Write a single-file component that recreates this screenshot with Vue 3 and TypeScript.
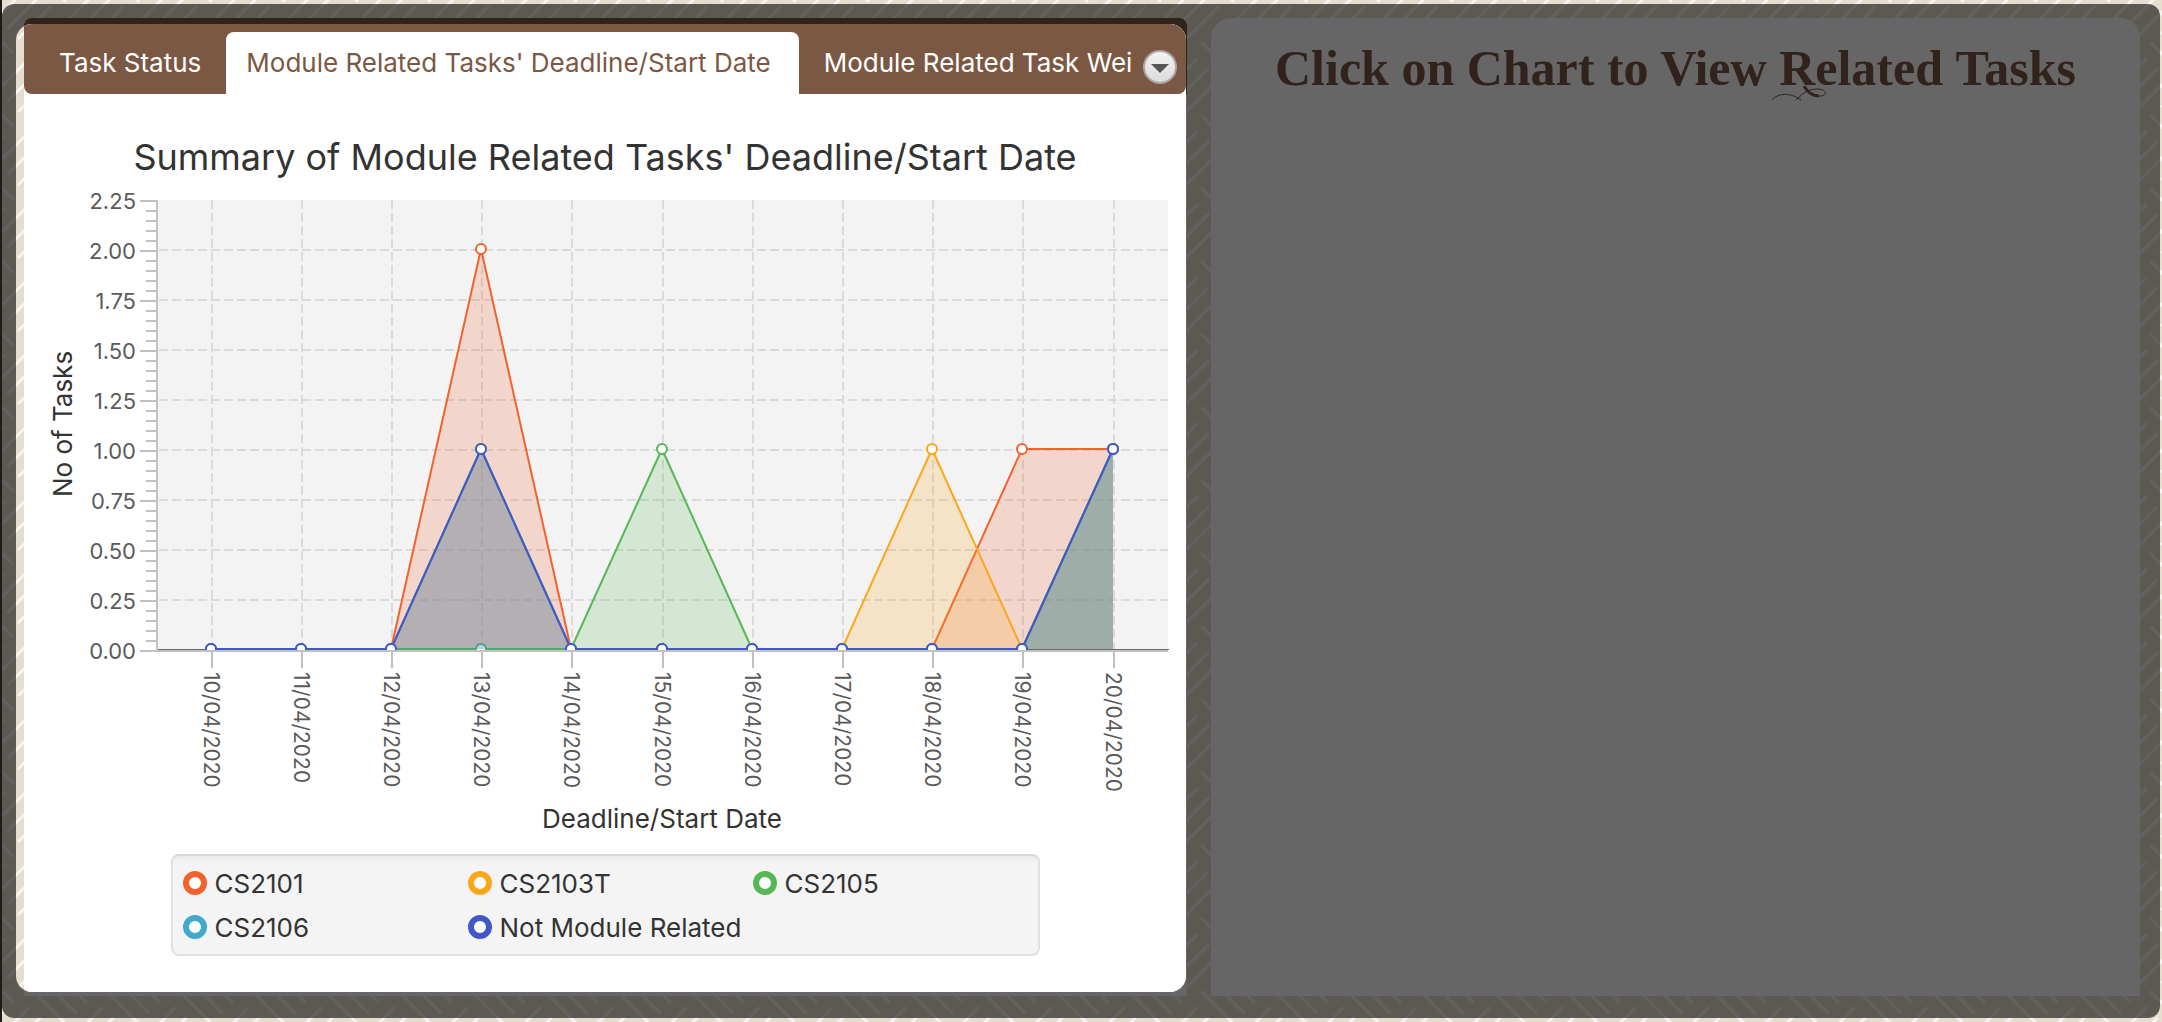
<script setup lang="ts">
import { ref } from 'vue'

interface Series {
  name: string
  color: string
  values: number[]
}

const tabs = ["Task Status", "Module Related Tasks' Deadline/Start Date", 'Module Related Task Wei']
const activeTab = ref(1)

const dates = [10, 11, 12, 13, 14, 15, 16, 17, 18, 19, 20].map((day) => `${day}/04/2020`)

const series: Series[] = [
  { name: 'CS2101', color: '#f3622d', values: [0, 0, 0, 2, 0, 0, 0, 0, 0, 1, 1] },
  { name: 'CS2103T', color: '#fba71b', values: [0, 0, 0, 1, 0, 0, 0, 0, 1, 0, 1] },
  { name: 'CS2105', color: '#57b757', values: [0, 0, 0, 0, 0, 1, 0, 0, 0, 0, 1] },
  { name: 'CS2106', color: '#41a9c9', values: [0, 0, 0, 1, 0, 0, 0, 0, 0, 0, 1] },
  { name: 'Not Module Related', color: '#4258c9', values: [0, 0, 0, 1, 0, 0, 0, 0, 0, 0, 1] },
]

// Plot area inside the chart's own coordinate system
const plot = { left: 133, right: 1144, top: 21, bottom: 471 }
const firstDate = 188
const dateStep = 90.2
const unit = 200

const tickX = (i: number): number => firstDate + Math.floor(i * dateStep)
const dataX = (i: number): number => tickX(i) - 1
const dataY = (v: number): number => plot.bottom - 1 - v * unit

const majors = Array.from({ length: 10 }, (_, i) => ({
  label: (2.25 - i * 0.25).toFixed(2),
  y: plot.top + 1 + i * 50,
}))
const minors = Array.from({ length: 45 }, (_, i) => plot.top + 1 + i * 10)
const gridRows = Array.from({ length: 8 }, (_, i) => plot.top + 50 + i * 50)

const linePoints = (s: Series): string => s.values.map((v, i) => `${dataX(i)},${dataY(v)}`).join(' ')
const areaPoints = (s: Series): string =>
  `${dataX(0)},${dataY(0)} ${linePoints(s)} ${dataX(s.values.length - 1)},${dataY(0)}`
</script>

<template>
  <main class="page">
    <div class="window">
      <section class="chart-side">
        <div class="popup">
          <div class="card">
            <nav class="tab-bar" role="tablist" aria-label="Statistics">
              <button
                v-for="(tab, i) in tabs"
                :key="tab"
                type="button"
                role="tab"
                class="tab"
                :class="{ active: i === activeTab }"
                :aria-selected="i === activeTab"
                @click="activeTab = i"
              >
                {{ tab }}
              </button>
              <button type="button" class="tab-menu" aria-label="More tabs">
                <svg width="18" height="9" viewBox="0 0 18 9"><path d="M0 0H18L9 9Z" fill="#555" /></svg>
              </button>
            </nav>

            <h2 class="chart-title">Summary of Module Related Tasks' Deadline/Start Date</h2>

            <svg class="chart" viewBox="0 0 1162 659" role="img" aria-label="Tasks per date">
              <defs>
                <clipPath id="plot-clip">
                  <rect :x="plot.left" :y="plot.top" :width="plot.right - plot.left" :height="plot.bottom - plot.top" />
                </clipPath>
              </defs>
              <rect
                :x="plot.left"
                :y="plot.top"
                :width="plot.right - plot.left"
                :height="plot.bottom - plot.top"
                fill="#f3f3f3"
              />

              <g class="grid">
                <line v-for="(d, i) in dates" :key="d" :x1="tickX(i)" :x2="tickX(i)" :y1="plot.top" :y2="plot.bottom" />
                <line v-for="y in gridRows" :key="y" :x1="plot.left + 2" :x2="plot.right" :y1="y" :y2="y" />
              </g>

              <rect :x="plot.left" :y="plot.bottom - 1" :width="plot.right - plot.left + 1" height="1" fill="#6b6b6b" />

              <g class="axis">
                <line :x1="plot.left" :x2="plot.left" :y1="plot.top" :y2="plot.bottom + 2" />
                <line :x1="plot.left" :x2="plot.right" :y1="plot.bottom + 1" :y2="plot.bottom + 1" />
                <line v-for="y in minors" :key="'n' + y" :x1="122" :x2="plot.left" :y1="y" :y2="y" />
                <line v-for="m in majors" :key="m.label" :x1="116" :x2="plot.left" :y1="m.y" :y2="m.y" />
                <line
                  v-for="(d, i) in dates"
                  :key="d"
                  :x1="tickX(i)"
                  :x2="tickX(i)"
                  :y1="plot.bottom + 2"
                  :y2="plot.bottom + 18"
                />
              </g>

              <g clip-path="url(#plot-clip)">
                <g v-for="s in series" :key="s.name">
                  <polygon :points="areaPoints(s)" :fill="s.color" fill-opacity="0.2" />
                  <polyline :points="linePoints(s)" :stroke="s.color" stroke-width="2" fill="none" />
                  <circle
                    v-for="(v, i) in s.values"
                    :key="i"
                    :cx="dataX(i)"
                    :cy="dataY(v)"
                    r="5"
                    fill="#fff"
                    :stroke="s.color"
                    stroke-width="2"
                  />
                </g>
              </g>

              <g class="value-label">
                <text v-for="m in majors" :key="m.label" x="112" :y="m.y + 8" text-anchor="end">{{ m.label }}</text>
              </g>
              <g class="date-label">
                <text v-for="(d, i) in dates" :key="d" :transform="`translate(${tickX(i) - 8} 493) rotate(90)`">
                  {{ d }}
                </text>
              </g>
              <text class="axis-title" transform="translate(48 245) rotate(-90)" text-anchor="middle">No of Tasks</text>
              <text class="axis-title" x="638" y="649" text-anchor="middle">Deadline/Start Date</text>
            </svg>

            <ul class="legend">
              <li v-for="s in series" :key="s.name" class="legend-item">
                <span class="ring" :style="{ borderColor: s.color }"></span>
                {{ s.name }}
              </li>
            </ul>
          </div>
        </div>
      </section>

      <section class="task-side">
        <h1 class="prompt">
          Click on Chart to View
          <span class="swash"
            >Related
            <svg class="flourish" width="58" height="16" viewBox="0 0 58 16" fill="none" stroke="#31221b">
              <path d="M1 14C7 7 19 6 30 14M25 14C31 8 37 3 46 3C57 3 57 11 47 10" stroke-width="1" />
              <path d="M33 0C37 7 41 10 48 10" stroke-width="3" />
            </svg>
          </span>
          Tasks
        </h1>
      </section>
    </div>
  </main>
</template>

<style>
body {
  margin: 0;
}
</style>

<style scoped>
.page,
.popup {
  background-color: #e5decf;
  background-image: url("data:image/svg+xml,%3Csvg xmlns='http://www.w3.org/2000/svg' width='73' height='73'%3E%3Cg id='g' stroke='%23f7f5f0' stroke-width='3' stroke-linecap='round'%3E%3Cpath d='M10 31L41 62M21 21L52 52M31 10L62 41'/%3E%3Cpath d='M-26 5L5 -26M-16 16L16 -16M-5 26L26 -5M47 5L78 -26M57 16L89 -16M68 26L99 -5M-26 78L5 47M-16 89L16 57M-5 99L26 68M47 78L78 47M57 89L89 57M68 99L99 68'/%3E%3C/g%3E%3C/svg%3E");
  background-position: 24px 12px;
  background-attachment: fixed;
}

.page {
  box-sizing: border-box;
  min-height: 100vh;
  display: flex;
  padding: 4px 2px 4px 0;
  border-left: 2px solid #1c1c1c;
  font-family: Inter, 'Liberation Sans', sans-serif;
  color: #333;
}

.window {
  flex: 1;
  display: grid;
  grid-template-columns: minmax(0, 1171fr) minmax(0, 929fr);
  gap: 24px;
  padding: 14px 20px 22px 14px;
  border-radius: 12px;
  background: rgba(0, 0, 0, 0.6);
}

.chart-side {
  position: relative;
  display: flex;
}

.chart-side::before {
  content: '';
  position: absolute;
  inset: 0 0 0 8px;
  border-radius: 8px 8px 0 0;
  background: linear-gradient(#31221b 76px, #666 76px);
}

.popup {
  position: relative;
  flex: 1;
  min-width: 0;
  display: flex;
  margin: 6px 1px 4px 0;
  padding-left: 8px;
  border-radius: 16px;
  overflow: hidden;
}

.card {
  flex: 1;
  min-width: 0;
  display: flex;
  flex-direction: column;
  background: #fff;
}

.tab-bar {
  position: relative;
  display: flex;
  height: 62px;
  padding: 8px 0 0 10px;
  border-radius: 0 0 8px 8px;
  background: #7b5844;
  overflow: hidden;
}

.tab {
  flex: none;
  padding: 0 25px 2px;
  border: 0;
  border-radius: 8px 8px 0 0;
  background: none;
  color: #fff;
  font: inherit;
  font-size: 26px;
  white-space: nowrap;
}

.tab.active {
  padding: 0 28px 2px 20px;
  background: #fff;
  color: #7b5844;
}

.tab-menu {
  position: absolute;
  top: 26px;
  right: 9px;
  display: grid;
  place-items: center;
  width: 34px;
  height: 34px;
  padding: 2px 0 0;
  border: 2px solid #a9a6a4;
  border-radius: 50%;
  background: linear-gradient(#f2f2f2, #dcdcdc);
}

.chart-title {
  margin: 41px 0 0;
  font-size: 36px;
  line-height: 44px;
  font-weight: 400;
  text-align: center;
}

.chart {
  display: block;
  width: 100%;
}

.grid {
  stroke: #dadada;
  stroke-width: 2;
  stroke-dasharray: 9 4;
}

.axis {
  stroke: #c1c1c1;
  stroke-width: 2;
}

.value-label {
  font-size: 22px;
  fill: #5a5a5a;
}

.date-label {
  font-size: 21px;
  fill: #5a5a5a;
}

.axis-title {
  font-size: 26px;
  fill: #333;
}

.legend {
  align-self: center;
  box-sizing: border-box;
  display: grid;
  grid-template-columns: repeat(3, 285px);
  grid-auto-rows: 44px;
  margin: 16px 0 36px;
  padding: 5px 0 5px 10px;
  border: 2px solid #e0e0e0;
  border-top-color: #d8d8d8;
  border-radius: 8px;
  background: linear-gradient(#ebebeb, #f4f4f4 6px);
  list-style: none;
  font-size: 26px;
}

.legend-item {
  display: flex;
  align-items: center;
  gap: 8px;
}

.ring {
  box-sizing: border-box;
  width: 24px;
  height: 24px;
  border: 6px solid;
  border-radius: 50%;
  background: #fff;
}

.task-side {
  border-radius: 20px 20px 0 0;
  background: #666;
}

.prompt {
  margin: 20px 0 0;
  color: #31221b;
  font-family: 'Liberation Serif', serif;
  font-size: 50px;
  line-height: 60px;
  font-weight: 700;
  text-align: center;
}

.swash {
  position: relative;
}

.flourish {
  position: absolute;
  left: -8px;
  bottom: -6px;
}
</style>
